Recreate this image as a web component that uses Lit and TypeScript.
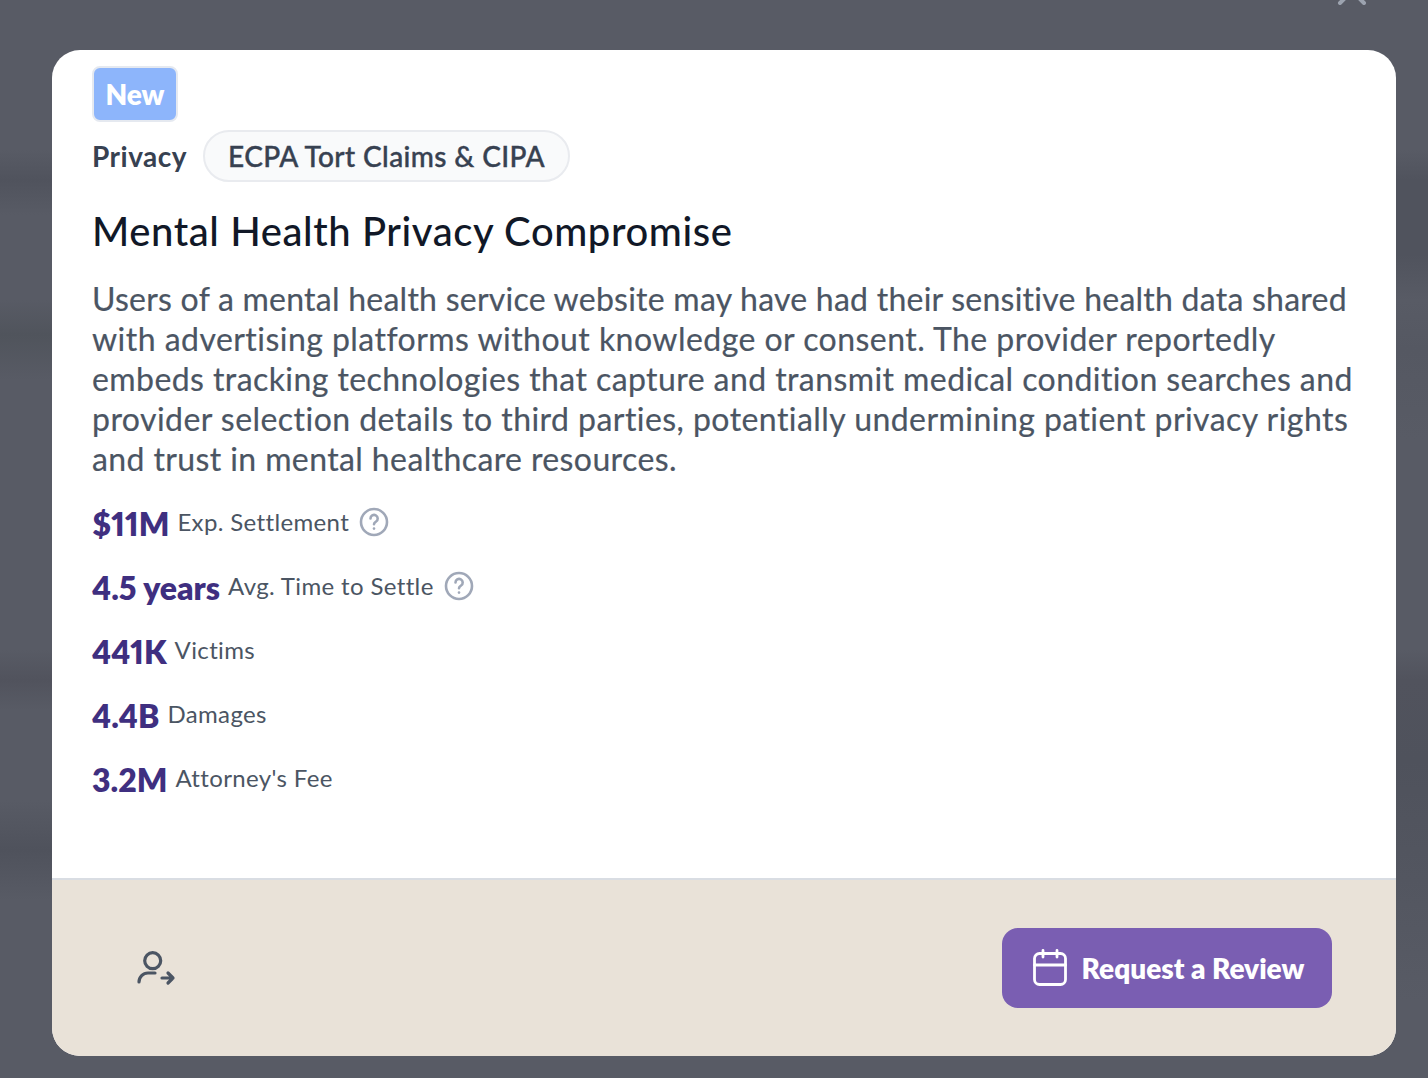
import { LitElement, html, css } from "lit";
import { customElement } from "lit/decorators.js";

const stats = [
  { value: "$11M", label: "Exp. Settlement", help: true },
  { value: "4.5 years", label: "Avg. Time to Settle", help: true },
  { value: "441K", label: "Victims", help: false },
  { value: "4.4B", label: "Damages", help: false },
  { value: "3.2M", label: "Attorney's Fee", help: false },
];

// each line carries its own tracking so the line ends land where they should
const descLines = [
  { text: "Users of a mental health service website may have had their sensitive health data shared", track: 0.245 },
  { text: "with advertising platforms without knowledge or consent. The provider reportedly", track: 0.46 },
  { text: "embeds tracking technologies that capture and transmit medical condition searches and", track: 0.42 },
  { text: "provider selection details to third parties, potentially undermining patient privacy rights", track: 0.45 },
  { text: "and trust in mental healthcare resources.", track: 0.39 },
];

@customElement("app-root")
export class AppRoot extends LitElement {
  static styles = css`
    :host {
      display: block;
      font-family: Lato, "Noto Sans", sans-serif;
      font-variant-ligatures: none;
      font-variant-numeric: proportional-nums;
    }
    .overlay {
      box-sizing: border-box;
      height: 1078px;
      padding: 50px 32px 22px 52px;
      overflow: hidden;
      position: relative;
      background-color: #585b65;
      background-repeat: no-repeat;
      background-size: 50% 100%;
      background-position: left top, right top;
      background-image:
        linear-gradient(
          to bottom,
          #585b65 150px,
          #50535d 180px,
          #585b65 215px,
          #585b65 300px,
          #50545c 335px,
          #585b65 380px,
          #585b65 650px,
          #51535d 680px,
          #585b65 710px,
          #585b65 800px,
          #4f525c 850px,
          #585b65 900px
        ),
        linear-gradient(
          to bottom,
          #585b65 150px,
          #50535d 180px,
          #50535d 255px,
          #585b65 300px,
          #555862 350px,
          #585b65 440px,
          #585b65 650px,
          #51535d 680px,
          #4f525c 760px,
          #535660 880px,
          #585b65 1000px
        );
    }
    .close {
      position: absolute;
      left: 1328px;
      top: -27px;
      width: 48px;
      height: 32px;
    }
    .card {
      height: 1006px;
      background: #fff;
      border-radius: 28px;
      overflow: hidden;
      display: flex;
      flex-direction: column;
    }
    .body {
      flex: 1;
      padding: 16px 40px 0;
    }
    .badge {
      box-sizing: border-box;
      width: 86px;
      height: 56px;
      display: flex;
      align-items: center;
      justify-content: center;
      background: #8db5fb;
      border: 2px solid #e5e9f0;
      border-radius: 8px;
      color: #fff;
      font-size: 28px;
      font-weight: 800;
    }
    .meta {
      display: flex;
      align-items: center;
      gap: 16px;
      margin-top: 8px;
    }
    .category {
      font-size: 28px;
      font-weight: 700;
      letter-spacing: 0.5px;
      color: #374151;
    }
    .pill {
      box-sizing: border-box;
      height: 52px;
      padding: 0 23px;
      display: flex;
      align-items: center;
      background: #f9fafb;
      border: 2px solid #e9ebef;
      border-radius: 26px;
      font-size: 28px;
      font-weight: 500;
      letter-spacing: 0.4px;
      -webkit-text-stroke: 0.4px #374151;
      color: #374151;
    }
    h1 {
      margin: 23px 0 0;
      font-size: 40px;
      line-height: 52px;
      font-weight: 500;
      letter-spacing: 0.58px;
      color: #111827;
    }
    .desc {
      margin: 22px 0 0;
      font-size: 32px;
      line-height: 40px;
      -webkit-text-stroke: 0.2px #4b5563;
      color: #4b5563;
    }
    .desc-line {
      display: block;
      white-space: nowrap;
    }
    .stats {
      margin-top: 12px;
      display: flex;
      flex-direction: column;
    }
    .stat {
      height: 64px;
      display: flex;
      align-items: center;
      gap: 8px;
    }
    .value {
      font-size: 32px;
      font-weight: 800;
      color: #3f2f80;
    }
    .label {
      font-size: 24px;
      letter-spacing: 0.36px;
      color: #4b5563;
      position: relative;
      top: -2px;
    }
    .help {
      width: 32px;
      height: 32px;
      margin-left: 1px;
      position: relative;
      top: -1px;
    }
    .footer {
      box-sizing: border-box;
      height: 178px;
      padding: 48px 64px 48px 80px;
      display: flex;
      align-items: center;
      justify-content: space-between;
      background: #e9e2d8;
      border-top: 2px solid #d9dde3;
    }
    .transfer {
      width: 48px;
      height: 48px;
    }
    button {
      width: 330px;
      height: 80px;
      display: flex;
      align-items: center;
      justify-content: center;
      gap: 12px;
      border: none;
      border-radius: 16px;
      background: #7a5eb2;
      color: #fff;
      font-family: inherit;
      font-size: 28px;
      font-weight: 800;
    }
    button svg {
      width: 40px;
      height: 40px;
    }
  `;

  render() {
    return html`
      <div class="overlay">
        <svg class="close" viewBox="0 0 48 32" fill="none" stroke="#9ca3af" stroke-width="4" stroke-linecap="round">
          <path d="M12 30 36 6M12 6l24 24" />
        </svg>
        <div class="card">
          <div class="body">
            <div class="badge">New</div>
            <div class="meta">
              <span class="category">Privacy</span>
              <span class="pill">ECPA Tort Claims &amp; CIPA</span>
            </div>
            <h1>Mental Health Privacy Compromise</h1>
            <p class="desc">
              ${descLines.map(
                (l) => html`<span class="desc-line" style="letter-spacing: ${l.track}px">${l.text}</span>`
              )}
            </p>
            <div class="stats">
              ${stats.map(
                (s) => html`
                  <div class="stat">
                    <span class="value">${s.value}</span>
                    <span class="label">${s.label}</span>
                    ${s.help
                      ? html`<svg class="help" viewBox="0 0 32 32" fill="none" stroke="#a0a8b8" stroke-width="2.6" stroke-linecap="round">
                          <circle cx="16" cy="16" r="13" />
                          <path d="M12.5 12.5a3.6 3.6 0 1 1 5.6 3c-1.2.8-2.1 1.4-2.1 2.8" />
                          <path d="M16 22.5v.1" />
                        </svg>`
                      : ""}
                  </div>
                `
              )}
            </div>
          </div>
          <div class="footer">
            <svg class="transfer" viewBox="0 0 48 48" fill="none" stroke="#4b5563" stroke-width="3.2" stroke-linecap="round" stroke-linejoin="round">
              <circle cx="20.7" cy="16.7" r="8" />
              <path d="M7 38a9 9 0 0 1 9-9h7" />
              <path d="M30 34h11M36 29l5 5-5 5" />
            </svg>
            <button>
              <svg viewBox="0 0 40 40" fill="none" stroke="#fff" stroke-width="2.8" stroke-linecap="round" stroke-linejoin="round">
                <rect x="4.5" y="5.5" width="31" height="31" rx="5" />
                <path d="M4.5 17h31M13 2.5V9M27 2.5V9" />
              </svg>
              Request a Review
            </button>
          </div>
        </div>
      </div>
    `;
  }
}
